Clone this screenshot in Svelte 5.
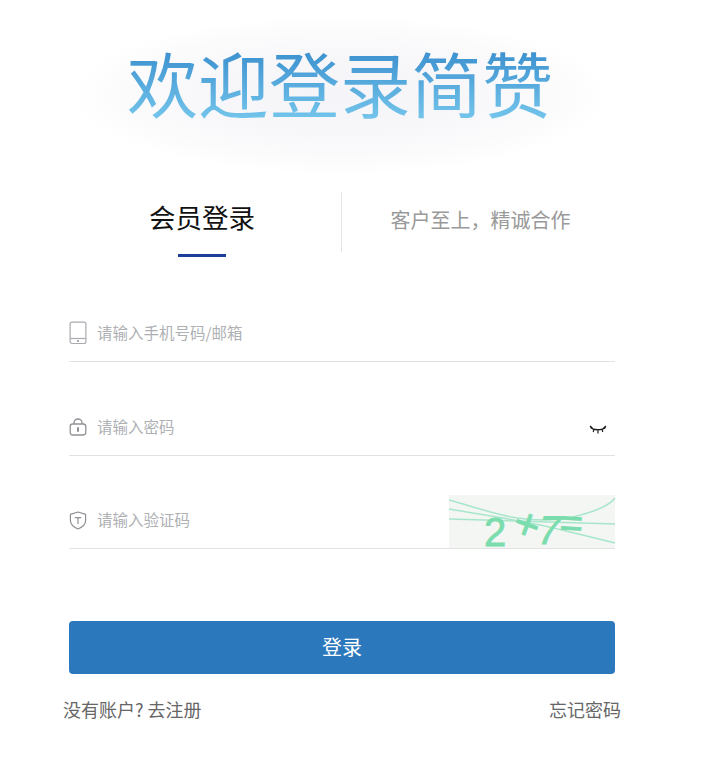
<script>
	let showPassword = $state(false);
	let active = $state('login');
</script>

<div class="page">
	<header class="hero">
		<h1>欢迎登录简赞</h1>
	</header>

	<nav class="tabs">
		<button type="button" class="tab" class:on={active === 'login'} onclick={() => (active = 'login')}>
			会员登录
		</button>
		<span class="tab-slogan">客户至上，精诚合作</span>
	</nav>

	<form class="form" onsubmit={(e) => e.preventDefault()}>
		<label class="field">
			<svg class="ico" width="18" height="24" viewBox="0 0 18 24" fill="none" stroke="#a9abb0" stroke-width="1.2">
				<rect x="1.1" y="1.1" width="15.8" height="21.4" rx="2" />
				<path d="M1.1 17.5h15.8" />
				<circle cx="9" cy="20" r="0.9" fill="#85878c" stroke="none" />
			</svg>
			<input type="text" placeholder="请输入手机号码/邮箱" />
		</label>

		<label class="field">
			<svg class="ico" width="18" height="18" viewBox="0 0 18 18" fill="none" stroke="#909296" stroke-width="1.3">
				<rect x="1.2" y="6" width="15.6" height="11" rx="2.4" />
				<path d="M5 6V4.6C5 2.6 6.8 1 9 1s4 1.6 4 3.6V6" />
				<path d="M9 10v3" stroke-width="2" stroke-linecap="round" />
			</svg>
			<input type={showPassword ? 'text' : 'password'} placeholder="请输入密码" />
			<button type="button" class="eye" aria-label="显示密码" onclick={() => (showPassword = !showPassword)}>
				<svg width="18" height="10" viewBox="0 0 18 10" fill="none" stroke="#1c1c1c" stroke-width="1.2">
					<path d="M1.5 2.2C4 5.6 13.5 5.6 16.5 2.2" stroke-width="1.4" />
					<path d="M1 1l2.4 2M5 4.4 4.2 7M9 5.2V8.4M13 4.4l.8 2.6M17 1l-2.4 2" />
				</svg>
			</button>
		</label>

		<label class="field tight">
			<svg class="ico" width="18" height="19" viewBox="0 0 18 19" fill="none" stroke="#8e9094" stroke-width="1.2">
				<path d="M9 1 16.6 3.4V9.6C16.6 13.4 13 16.4 9 18 5 16.4 1.4 13.4 1.4 9.6V3.4Z" stroke-linejoin="round" />
				<path d="M5.8 6.6h6.4M9 6.6v6.4" />
			</svg>
			<input type="text" placeholder="请输入验证码" />
			<svg class="captcha" width="166" height="53" viewBox="0 0 166 53" fill="none">
				<rect width="166" height="53" fill="#f3f6f3" />
				<g stroke="#a8e6cb" stroke-width="1.5">
					<path d="M0 5C25 12 48 20 68 23 90 26 110 25 124 22 145 17 160 11 166 3" />
					<path d="M0 14C30 19 62 24 91 30 118 36 142 42 166 48" />
					<path d="M0 24 166 29" />
				</g>
				<g class="captcha-text">
					<text x="35" y="51">2</text>
					<text class="plus" x="0" y="0" transform="translate(61 39) rotate(20)">+</text>
					<text x="0" y="0" transform="translate(86 49) skewX(-14)">7</text>
					<text x="0" y="0" transform="translate(110 41) rotate(3)">=</text>
				</g>
			</svg>
		</label>

		<button type="submit" class="submit">登录</button>

		<div class="links">
			<a href="#register">没有账户? 去注册</a>
			<a href="#forgot">忘记密码</a>
		</div>
	</form>
</div>

<style>
	:global(body) {
		background: #fff;
	}
	.page {
		width: 710px;
		height: 761px;
		overflow: hidden;
		font-family: 'Noto Sans CJK SC', 'Liberation Sans', sans-serif;
	}
	.hero {
		height: 192px;
		display: flex;
		justify-content: center;
		padding: 34px 30px 0 0;
		box-sizing: border-box;
		background: radial-gradient(ellipse 270px 80px at 341px 95px, #f5f4f8 0%, #f7f6f9 45%, #fbfbfc 78%, #ffffff 100%);
	}
	h1 {
		margin: 0;
		font-size: 71px;
		line-height: 94px;
		height: 94px;
		font-weight: 400;
		background: linear-gradient(#3a8fce 15%, #72c3ea 88%);
		-webkit-background-clip: text;
		background-clip: text;
		color: transparent;
	}
	.tabs {
		display: flex;
		height: 65px;
		margin-left: 69px;
		width: 546px;
	}
	.tab {
		width: 273px;
		height: 60px;
		box-sizing: border-box;
		border: 0;
		border-right: 1px solid #e4e4e4;
		background: none;
		padding: 0 6px 11px 0;
		font: inherit;
		font-size: 26.5px;
		color: #111;
		position: relative;
	}
	.tab.on::after {
		content: '';
		position: absolute;
		left: 109px;
		bottom: -5px;
		width: 48px;
		height: 3px;
		background: #1b3f98;
	}
	.tab-slogan {
		flex: 1;
		height: 60px;
		box-sizing: border-box;
		display: flex;
		align-items: center;
		justify-content: center;
		padding: 0 0 6px 4px;
		font-size: 20px;
		color: #999;
	}
	.form {
		width: 546px;
		margin-left: 69px;
		padding-top: 48px;
	}
	.field {
		display: flex;
		align-items: center;
		gap: 10px;
		height: 56px;
		margin-top: 37px;
		border-bottom: 1px solid #e2e2e2;
	}
	.field:first-child {
		margin-top: 0;
	}
	.field.tight {
		margin-top: 36px;
	}
	.ico {
		flex: none;
		width: 18px;
	}
	input {
		flex: 1;
		min-width: 0;
		border: 0;
		outline: 0;
		padding: 0;
		height: 30px;
		margin-bottom: 2px;
		font: inherit;
		font-size: 15.5px;
		color: #333;
		background: none;
	}
	input::placeholder {
		color: #aeb0b4;
	}
	.eye {
		border: 0;
		background: none;
		padding: 0;
		margin: 5px 8px 0 0;
		display: flex;
		cursor: pointer;
	}
	.captcha {
		flex: none;
		align-self: flex-end;
		overflow: visible;
	}
	.captcha-text text {
		font-family: 'Liberation Sans', sans-serif;
		font-size: 40px;
		fill: #7bdcae;
		stroke: #7bdcae;
		stroke-width: 0.8;
	}
	.captcha-text .plus {
		font-size: 44px;
	}
	.submit {
		display: block;
		width: 100%;
		height: 53px;
		margin-top: 72px;
		border: 0;
		border-radius: 4px;
		background: #2b78bd;
		color: #fff;
		font: inherit;
		font-size: 20px;
		padding: 0 0 2px;
		cursor: pointer;
	}
	.links {
		display: flex;
		justify-content: space-between;
		margin: 22px -6px 0;
		font-size: 18px;
		line-height: 26px;
	}
	.links a {
		color: #666;
		text-decoration: none;
	}
</style>
